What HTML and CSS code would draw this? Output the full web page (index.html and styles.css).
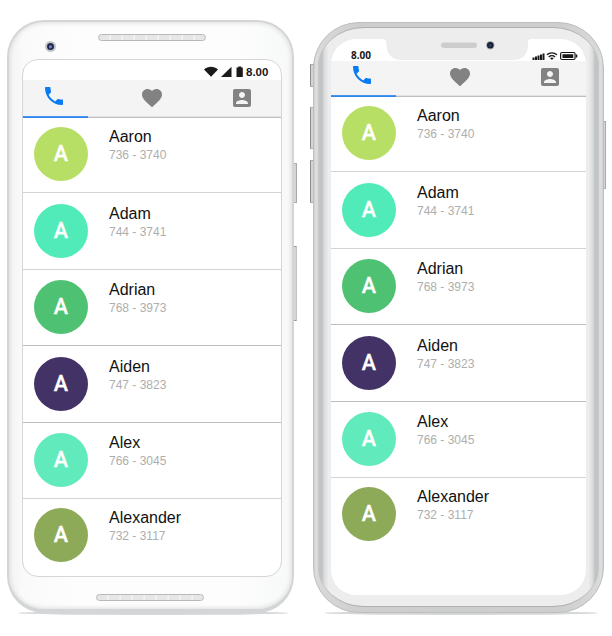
FILE: index.html
```html
<!DOCTYPE html>
<html lang="en">
<head>
<meta charset="utf-8">
<title>Contacts</title>
<link rel="stylesheet" href="styles.css">
</head>
<body>
<svg class="defs" aria-hidden="true">
  <symbol id="phone" viewBox="0 0 24 24"><path d="M6.62 10.79c1.44 2.83 3.76 5.14 6.59 6.59l2.2-2.2c.27-.27.67-.36 1.02-.24 1.12.37 2.33.57 3.57.57.55 0 1 .45 1 1V20c0 .55-.45 1-1 1-9.39 0-17-7.61-17-17 0-.55.45-1 1-1h3.5c.55 0 1 .45 1 1 0 1.25.2 2.45.57 3.57.11.35.03.74-.25 1.02l-2.2 2.2z"/></symbol>
  <symbol id="heart" viewBox="0 0 24 24"><path d="M12 21.35l-1.45-1.32C5.4 15.36 2 12.28 2 8.5 2 5.42 4.42 3 7.5 3c1.74 0 3.41.81 4.5 2.09C13.09 3.81 14.76 3 16.5 3 19.58 3 22 5.42 22 8.5c0 3.78-3.4 6.86-8.55 11.54L12 21.35z"/></symbol>
  <symbol id="account" viewBox="0 0 24 24"><path d="M3 5v14c0 1.1.89 2 2 2h14c1.1 0 2-.9 2-2V5c0-1.1-.9-2-2-2H5c-1.11 0-2 .9-2 2zm12 4c0 1.66-1.34 3-3 3s-3-1.34-3-3 1.34-3 3-3 3 1.34 3 3zm-9 8c0-2 4-3.1 6-3.1s6 1.1 6 3.1v1H6v-1z"/></symbol>
</svg>
<main class="stage">
  <section class="phone android">
    <i class="key power"></i><i class="key volume"></i>
    <i class="ground"></i>
    <div class="shell">
      <header class="bezel-top"><i class="lens"></i><i class="speaker"></i></header>
      <div class="screen">
        <div class="status">
          <svg width="39" height="12" viewBox="0 0 39 12" fill="#1c1a1b"><path d="M0 3.6C4-.2 10-.2 14 3.6L7 10.7z"/><path d="M17 11 27.5.8V11z"/><path d="M32.500 1.600h1.700V.5h3v1.100h1.600V11h-6.300z"/></svg>
          <span>8.00</span>
        </div>
        <nav class="tabs"><svg class="tab active"><use href="#phone"/></svg><svg class="tab"><use href="#heart"/></svg><svg class="tab"><use href="#account"/></svg></nav>
        <ul class="list">
          <li><b class="avatar lime">A</b><div><h2>Aaron</h2><p>736 - 3740</p></div></li>
          <li><b class="avatar mint">A</b><div><h2>Adam</h2><p>744 - 3741</p></div></li>
          <li><b class="avatar green">A</b><div><h2>Adrian</h2><p>768 - 3973</p></div></li>
          <li><b class="avatar purple">A</b><div><h2>Aiden</h2><p>747 - 3823</p></div></li>
          <li><b class="avatar aqua">A</b><div><h2>Alex</h2><p>766 - 3045</p></div></li>
          <li><b class="avatar olive">A</b><div><h2>Alexander</h2><p>732 - 3117</p></div></li>
        </ul>
      </div>
      <footer class="bezel-bottom"><i class="speaker"></i></footer>
    </div>
  </section>

  <section class="phone iphone">
    <i class="key mute"></i><i class="key up"></i><i class="key down"></i><i class="key side"></i>
    <i class="ground"></i>
    <div class="shell"><div class="rim"><div class="screen">
      <svg class="notch" width="150" height="22" viewBox="0 0 150 22"><path d="M0 0C3 0 4.500 1 4.500 4v3C5 15 10 21 20 21H131c10 0 14.500-6 15-14V4c0-3 1-4 4-4z" fill="#ededed"/><rect x="59" y="3.500" width="36" height="5.500" rx="2.700" fill="#cdcdcd"/><circle cx="108.300" cy="6.300" r="4.200" fill="#a9afb8"/><circle cx="108.300" cy="6.300" r="3.300" fill="#1b2235"/><circle cx="108" cy="6.500" r="1.300" fill="#2d436d"/></svg>
      <div class="status">
        <span>8.00</span>
        <svg width="46" height="11" viewBox="0 0 46 11"><g fill="#171717"><path d="M.5 7.500h2V10h-2zM3 6.500h2V10H3zM5.500 5.500h2V10h-2zM8 4.500h2V10H8zM10.500 3.500h2V10h-2z"/><path d="m19.900 10-1.900-1.900c1.100-.9 2.700-.9 3.800 0z"/></g><path d="M14.900 4.800c2.900-2.600 7.100-2.600 10 0M16.700 6.900c1.800-1.600 4.600-1.600 6.400 0" fill="none" stroke="#171717" stroke-width="1.400"/><rect x="28.600" y="2.500" width="14.500" height="7" rx="1.500" fill="none" stroke="#171717" stroke-width="1.200"/><path d="M30.500 4.200h10.800v3.700H30.500zM44 4.500h1.300v3H44z" fill="#171717"/></svg>
      </div>
      <nav class="tabs"><svg class="tab active"><use href="#phone"/></svg><svg class="tab"><use href="#heart"/></svg><svg class="tab"><use href="#account"/></svg></nav>
      <ul class="list">
        <li><b class="avatar lime">A</b><div><h2>Aaron</h2><p>736 - 3740</p></div></li>
        <li><b class="avatar mint">A</b><div><h2>Adam</h2><p>744 - 3741</p></div></li>
        <li><b class="avatar green">A</b><div><h2>Adrian</h2><p>768 - 3973</p></div></li>
        <li><b class="avatar purple">A</b><div><h2>Aiden</h2><p>747 - 3823</p></div></li>
        <li><b class="avatar aqua">A</b><div><h2>Alex</h2><p>766 - 3045</p></div></li>
        <li><b class="avatar olive">A</b><div><h2>Alexander</h2><p>732 - 3117</p></div></li>
      </ul>
    </div></div></div>
  </section>
</main>
</body>
</html>
```
FILE: styles.css
```css
* { box-sizing: border-box; }
body { margin: 0; background: #fff; font-family: "Liberation Sans", Arial, sans-serif; overflow: hidden; }
h2, p, ul { margin: 0; padding: 0; }
i { display: block; }
.defs { display: none; }
.stage { display: flex; align-items: flex-start; gap: 19px; padding: 20px 0 0 7px; height: 636px; }
.phone { position: relative; flex: none; }
.shell { position: relative; }

.android { width: 287px; height: 593px; }
.android .shell {
  height: 593px;
  padding: 0 12px 0 13px;
  border: 2px solid #d3d5d7;
  border-bottom-width: 4px;
  border-radius: 37px;
  background: linear-gradient(90deg, #f3f3f3, #fafafa 5%, #fdfdfd 25%, #fdfdfd 80%, #f7f8f8);
  box-shadow: inset 0 0 4px 1px #dcdddf;
}
.bezel-top { display: flex; align-items: flex-start; height: 37px; padding: 12px 0 0 22.500px; }
.lens { width: 11px; height: 11px; margin-top: 7px; border-radius: 50%; border: 2px solid #c5c6c9; background: radial-gradient(circle at 50% 55%, #7581cf 0 1px, #23294e 2px 3px, #3a3b46 4px); }
.speaker { width: 108px; height: 7px; border: 1px solid #b8b8b8; border-radius: 4px; background: repeating-linear-gradient(90deg, #e6e6e6 0 10px, #f3f3f3 11px 12px); }
.bezel-top .speaker { margin-left: 42.500px; }
.bezel-bottom { padding: 17px 0 0 74px; }
.android .screen { width: 260px; height: 518px; border: 1px solid #d6d6d6; border-radius: 16px; background: #fff; overflow: hidden; }
.status { display: flex; align-items: center; color: #171717; font-weight: bold; }
.android .status { height: 20px; justify-content: flex-end; gap: 3px; padding: 4px 12px 0 0; font: 700 11.5px/14px "Liberation Sans", Arial, sans-serif; }
.android .status span { width: 23px; }
.tabs { display: flex; height: 38px; padding: 4px 0 0 18.500px; background: linear-gradient(90deg, #2f87ed 65px, #bdbdbd 65px) 0 100% / 100% 1px no-repeat, linear-gradient(90deg, #4594f0 65px, #e4e4e4 65px) 0 calc(100% - 1px) / 100% 1px no-repeat, #f4f4f4; }
.tab { width: 24px; height: 24px; margin-top: 2px; fill: #828282; }
.tab.active { margin-top: 0; fill: #0a7bf0; }
.tab:nth-child(2) { margin-left: 74px; }
.tab:nth-child(3) { margin-left: 66.500px; }
.list { list-style: none; margin-top: -1.500px; }
.list li { display: flex; gap: 21px; height: 76.500px; padding: 10.500px 0 0 11px; border-bottom: 1px solid #d3d3d3; }
.list li:nth-child(3), .list li:nth-child(4) { border-color: #bdbdbd; }
.list li:last-child { padding-top: 8.500px; border: 0; }
.list div { padding-top: 1px; }
h2 { color: #111; font-size: 16px; line-height: 18px; font-weight: 400; }
p { margin-top: 2px; color: #aeaeae; font-size: 12px; line-height: 14px; }
.avatar { flex: none; width: 54px; height: 54px; border-radius: 50%; color: #fff; font: 500 21.5px/54px Roboto, sans-serif; text-align: center; -webkit-text-stroke: .3px #fff; }
.lime { background: #b8df65; }
.mint { background: #50ebb8; }
.green { background: #4ec272; }
.purple { background: #433266; }
.aqua { background: #61ebbd; }
.olive { background: #8daa58; }

.ground { position: absolute; left: 11px; right: 6px; bottom: -2px; height: 4px; border-radius: 50%; background: #d5d8d8; }
.key { position: absolute; width: 4px; border: 1px solid #aaa; border-left-color: #8e8c8d; background: #d5d3d4; border-radius: 1px; }
.power { right: -3px; top: 143px; height: 40px; }
.volume { right: -3px; top: 226px; height: 75px; border-color: #999 #c5c2c4 #999 #d3d1d2; }

.iphone { width: 291px; height: 591px; margin-top: 2px; }
.mute, .up, .down { left: -3px; }
.mute { top: 42px; height: 23px; }
.up { top: 85px; height: 42px; }
.down { top: 138px; height: 43px; }
.side { right: -2px; top: 99px; height: 68px; }
.iphone .shell {
  height: 591px;
  padding: 4px 4px 5px;
  border: 1px solid #bebebe;
  border-radius: 46px;
  background: linear-gradient(90deg, #d0d0d0, #dedfdf 2px, #d8d9d9 4px, #cecece 45px, #cecece calc(100% - 45px), #d8d9d9 calc(100% - 4px), #dedfdf calc(100% - 2px), #d0d0d0);
}
.rim {
  height: 580px;
  padding: 11px 13px 12px;
  border: solid #afb0b1;
  border-width: 1px 0;
  border-radius: 46px / 41px;
  background: linear-gradient(90deg, #c8cacc, #c1c3c5 2px 4px, #cccecf 5px, #dee0e1 7px, #e4e5e6 9px, #ededed 10px, #ededed calc(100% - 10px), #e4e5e6 calc(100% - 9px), #dee0e1 calc(100% - 7px), #cccecf calc(100% - 5px), #c1c3c5 calc(100% - 4px) calc(100% - 2px), #c8cacc);
}
.iphone .screen { position: relative; height: 556px; border-radius: 25px; background: #fff; overflow: hidden; }
.notch { position: absolute; top: 0; left: 51px; }
.iphone .status { height: 22px; justify-content: space-between; padding: 11px 8px 0 20px; font: 700 10px/11px "Noto Sans", sans-serif; }
.iphone .tabs { height: 36px; padding-top: 2px; }
```
